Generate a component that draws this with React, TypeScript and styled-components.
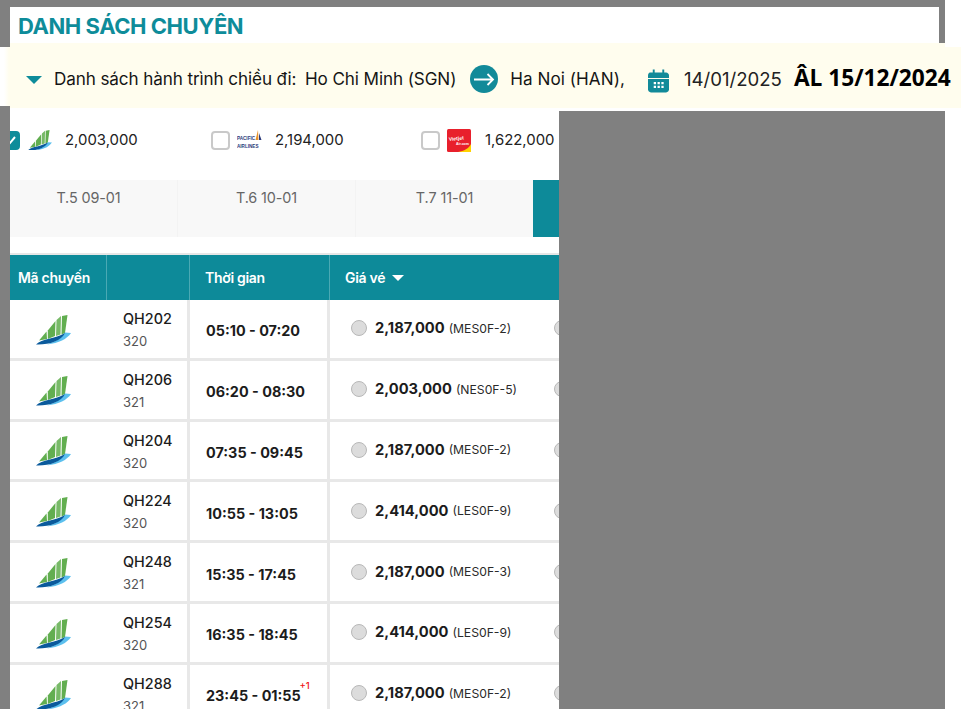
import React from "react";
import styled, { createGlobalStyle } from "styled-components";

const Global = createGlobalStyle`
  html, body { margin: 0; padding: 0; background: #fff; height: 100%; overflow: hidden; }
  #root { height: 100%; }
  * { box-sizing: border-box; }
  body { font-family: Inter, "Liberation Sans", sans-serif; color: #1a1a1a; }
`;

const Stage = styled.div`
  position: relative;
  width: 963px;
  height: 709px;
  overflow: hidden;
`;
const Canvas = styled.div`
  width: 945px;
  height: 709px;
  background: #808080;
  padding: 7px 0 0 10px;
`;
const TitleBar = styled.div`
  width: 929px;
  height: 36px;
  background: #fff;
  padding: 2px 0 0 8px;
  display: flex;
  align-items: center;
`;
const Title = styled.h1`
  margin: 0;
  font-size: 22px;
  font-weight: 700;
  letter-spacing: -0.45px;
  color: #0e8c9a;
  line-height: 1;
`;
const Panel = styled.div`
  width: 549px;
  height: 666px;
  background: #fff;
  padding-top: 87px;
  overflow: hidden;
`;
const Banner = styled.div`
  position: absolute;
  left: 10px;
  top: 43px;
  width: 951px;
  height: 65px;
  background: #fffdee;
  box-shadow: 0 3px 0 #fff;
  display: flex;
  align-items: center;
  padding: 6px 0 0 16px;
  font-size: 17.1px;
  letter-spacing: -0.1px;
  color: #151515;
  &::before {
    content: "";
    position: absolute;
    left: -10px;
    top: 4px;
    width: 10px;
    height: 59px;
    background: linear-gradient(90deg, #fff 40%, #fffdee 90%);
  }
  &::after {
    content: "";
    position: absolute;
    right: 0;
    top: 0;
    width: 16px;
    height: 4px;
    background: #fff;
  }
`;
const Caret = styled.span`
  width: 0;
  height: 0;
  border-left: 8px solid transparent;
  border-right: 8px solid transparent;
  border-top: 8px solid #0e8c9a;
  margin: 2px 12px 0 0;
`;
const Label = styled.span`
  white-space: nowrap;
  width: 251px;
`;
const Place = styled.span`
  white-space: nowrap;
`;
const HanoiPlace = styled(Place)`
  letter-spacing: 0.05px;
`;
const ArrowDisc = styled.span`
  width: 28px;
  height: 28px;
  margin: 0 12px 0 14px;
  display: flex;
`;
const CalendarSlot = styled.span`
  width: 21px;
  height: 25px;
  margin: 4px 15px 0 23px;
  display: flex;
`;
const DateText = styled.span`
  white-space: nowrap;
  color: #222;
  font-size: 18.6px;
  letter-spacing: 0;
`;
const Lunar = styled.span`
  white-space: nowrap;
  font-family: "Open Sans", "Noto Sans", sans-serif;
  font-weight: 700;
  font-size: 22.7px;
  letter-spacing: 0;
  color: #000;
  margin: -3px 0 0 12px;
`;
const FilterRow = styled.div`
  display: flex;
  margin-left: -9px;
  height: 20px;
  align-items: center;
`;
const FilterItem = styled.div`
  flex: 0 0 210px;
  display: flex;
  align-items: center;
`;
const Check = styled.span<{ $on?: boolean }>`
  width: 19px;
  height: 19px;
  border-radius: 4px;
  border: 2px solid ${(p) => (p.$on ? "#0e8c9a" : "#c9c9c9")};
  background: ${(p) => (p.$on ? "#0e8c9a" : "#fff")};
  display: flex;
  align-items: center;
  justify-content: center;
`;
const LogoSlot = styled.span`
  width: 37px;
  margin-left: 7px;
  display: flex;
`;
const FilterPrice = styled.span`
  margin-left: 1px;
  font-size: 14.9px;
  color: #222;
`;
const Tabs = styled.div`
  display: flex;
  margin: 30px 0 0 -11px;
  height: 57px;
  background: #f8f8f8;
`;
const Tab = styled.div<{ $active?: boolean }>`
  flex: 0 0 178px;
  padding-top: 9px;
  text-align: center;
  font-size: 14.4px;
  letter-spacing: -0.1px;
  color: #666;
  background: ${(p) => (p.$active ? "#0d8a99" : "transparent")};
  border-left: 1px solid ${(p) => (p.$active ? "#0d8a99" : "#f3f3f3")};
`;
const Table = styled.div`
  margin-top: 16px;
  border-top: 2px solid #e6e6e6;
`;
const Grid = styled.div`
  display: grid;
  grid-template-columns: 97px 83px 140px 229px;
`;
const HeadRow = styled(Grid)`
  height: 45px;
  background: #0d8a99;
`;
const HeadCell = styled.div<{ $pad: number }>`
  display: flex;
  align-items: center;
  padding-left: ${(p) => p.$pad}px;
  color: #fff;
  font-size: 14px;
  font-weight: 600;
  letter-spacing: -0.3px;
  border-right: 1px solid #4aa9b4;
  &:last-child { border-right: 0; }
`;
const SortCaret = styled.span`
  width: 0;
  height: 0;
  margin-left: 7px;
  border-left: 6px solid transparent;
  border-right: 6px solid transparent;
  border-top: 6px solid #fff;
`;
const Row = styled(Grid)`
  height: 60.8px;
  border-bottom: 3px solid #e8e8e8;
`;
const LogoCell = styled.div`
  display: flex;
  justify-content: center;
  align-items: center;
  padding: 2px 11px 0 0;
`;
const CodeCell = styled.div`
  padding: 10px 0 0 16px;
  border-right: 3px solid #e8e8e8;
`;
const FlightNo = styled.div`
  font-size: 14.4px;
  font-weight: 500;
  line-height: 18px;
  color: #1c1c1c;
`;
const Craft = styled.div`
  margin-top: 5px;
  font-size: 13px;
  line-height: 16px;
  color: #555;
`;
const TimeCell = styled.div`
  display: flex;
  align-items: center;
  padding: 4px 0 0 16px;
  font-size: 14.4px;
  font-weight: 700;
  color: #1c1c1c;
  border-right: 3px solid #e8e8e8;
`;
const TimeText = styled.span`
  position: relative;
`;
const Plus = styled.sup`
  position: absolute;
  right: -9px;
  top: -6px;
  margin: 0;
  font-size: 9.5px;
  line-height: 1;
  font-weight: 500;
  color: #f01414;
`;
const PriceCell = styled.div`
  display: flex;
  align-items: center;
  padding: 0 0 1px 21px;
  position: relative;
`;
const Radio = styled.span`
  flex: none;
  width: 16px;
  height: 16px;
  border-radius: 50%;
  background: #dcdcdc;
  border: 1px solid #b8b8b8;
  margin-right: 8px;
`;
const NextRadio = styled(Radio)`
  position: absolute;
  left: 224px;
  margin: 0;
`;
const Fare = styled.span`
  font-size: 14.7px;
  font-weight: 700;
  color: #1c1c1c;
`;
const FareCode = styled.span`
  margin-left: 4px;
  font-size: 12.2px;
  color: #2a2a2a;
`;

const Bamboo = ({ w = 36 }: { w?: number }) => (
  <svg width={w} height={(w * 30) / 36} viewBox="0 0 36 30">
    <path d="M4 25.5 L11.5 16.5 L12 24Z" fill="#62ae50" />
    <path d="M12.8 24 L12.8 15.5 L20.5 6 L20 21Z" fill="#62ae50" />
    <path d="M21 21 L21.5 5 L26 1 L25.5 19.5Z" fill="#78ba68" />
    <path d="M26.5 19.5 L27 1 L32.5 0 L30 18Z" fill="#62ae50" />
    <path d="M30 17.5 L36 18 C32 24 24 28 12 29.5 C20 27 26 23 30 17.5Z" fill="#5cc0ee" />
    <path d="M1 29.5 C7 23.5 20 24 30 18 C26 26 14 30 1 29.5Z" fill="#0a5a9c" />
  </svg>
);

const Pacific = () => (
  <svg width="25" height="20" viewBox="0 0 25 20">
    <path d="M21 0 L21.5 10 L18.5 10Z" fill="#e8922a" />
    <path d="M22 3 L24.5 10 L22 10Z" fill="#2b3a7a" />
    <text x="0" y="10" fontFamily="Liberation Sans" fontWeight="700" fontSize="4.6" fill="#2b3a7a">PACIFIC</text>
    <text x="0" y="18" fontFamily="Liberation Sans" fontWeight="700" fontSize="4.6" fill="#2b3a7a">AIRLINES</text>
  </svg>
);

const Vietjet = () => (
  <svg width="24" height="23" viewBox="0 0 24 23">
    <rect width="24" height="23" rx="1.5" fill="#e8202c" />
    <path d="M24 15 V23 H11 C17 22 22 19.5 24 15Z" fill="#ffd200" />
    <text x="2" y="12" fontFamily="Liberation Sans" fontWeight="700" fontSize="5" fill="#fff" transform="rotate(-6 2 12)">Vietjet</text>
    <text x="9" y="16" fontFamily="Liberation Sans" fontWeight="700" fontSize="3.5" fill="#fff">Air.com</text>
  </svg>
);

const flights = [
  { no: "QH202", craft: "320", time: "05:10 - 07:20", fare: "2,187,000", code: "(MES0F-2)" },
  { no: "QH206", craft: "321", time: "06:20 - 08:30", fare: "2,003,000", code: "(NES0F-5)" },
  { no: "QH204", craft: "320", time: "07:35 - 09:45", fare: "2,187,000", code: "(MES0F-2)" },
  { no: "QH224", craft: "320", time: "10:55 - 13:05", fare: "2,414,000", code: "(LES0F-9)" },
  { no: "QH248", craft: "321", time: "15:35 - 17:45", fare: "2,187,000", code: "(MES0F-3)" },
  { no: "QH254", craft: "320", time: "16:35 - 18:45", fare: "2,414,000", code: "(LES0F-9)" },
  { no: "QH288", craft: "321", time: "23:45 - 01:55", fare: "2,187,000", code: "(MES0F-2)", plus: true },
];

export default function App() {
  return (
    <Stage>
      <Global />
      <Canvas>
        <TitleBar>
          <Title>DANH SÁCH CHUYÊN</Title>
        </TitleBar>
        <Panel>
          <FilterRow>
            <FilterItem>
              <Check $on>
                <svg width="13" height="13" viewBox="0 0 13 13">
                  <path d="M2 7 L5.2 10 L11 3" fill="none" stroke="#fff" strokeWidth="2" />
                </svg>
              </Check>
              <LogoSlot><Bamboo w={25} /></LogoSlot>
              <FilterPrice>2,003,000</FilterPrice>
            </FilterItem>
            <FilterItem>
              <Check />
              <LogoSlot><Pacific /></LogoSlot>
              <FilterPrice>2,194,000</FilterPrice>
            </FilterItem>
            <FilterItem>
              <Check />
              <LogoSlot><Vietjet /></LogoSlot>
              <FilterPrice>1,622,000</FilterPrice>
            </FilterItem>
          </FilterRow>
          <Tabs>
            <Tab>T.5 09-01</Tab>
            <Tab>T.6 10-01</Tab>
            <Tab>T.7 11-01</Tab>
            <Tab $active />
          </Tabs>
          <Table>
            <HeadRow>
              <HeadCell $pad={8}>Mã chuyến</HeadCell>
              <HeadCell $pad={0} />
              <HeadCell $pad={15}>Thời gian</HeadCell>
              <HeadCell $pad={15}>
                Giá vé<SortCaret />
              </HeadCell>
            </HeadRow>
            {flights.map((f) => (
              <Row key={f.no}>
                <LogoCell><Bamboo /></LogoCell>
                <CodeCell>
                  <FlightNo>{f.no}</FlightNo>
                  <Craft>{f.craft}</Craft>
                </CodeCell>
                <TimeCell>
                  <TimeText>
                    {f.time}
                    {f.plus && <Plus>+1</Plus>}
                  </TimeText>
                </TimeCell>
                <PriceCell>
                  <Radio />
                  <Fare>{f.fare}</Fare>
                  <FareCode>{f.code}</FareCode>
                  <NextRadio />
                </PriceCell>
              </Row>
            ))}
          </Table>
        </Panel>
      </Canvas>
      <Banner>
        <Caret />
        <Label>Danh sách hành trình chiều đi:</Label>
        <Place>Ho Chi Minh (SGN)</Place>
        <ArrowDisc>
          <svg width="28" height="28" viewBox="0 0 28 28">
            <circle cx="14" cy="14" r="14" fill="#128a99" />
            <path d="M4 14.5 H23 M17.5 9 L23 14.5 L17.5 20" fill="none" stroke="#fff" strokeWidth="1.8" />
          </svg>
        </ArrowDisc>
        <HanoiPlace>Ha Noi (HAN),</HanoiPlace>
        <CalendarSlot>
          <svg width="21" height="25" viewBox="0 0 22 25">
            <path d="M2 4 H19 C20.5 4 22 5.5 22 7 V10 H0 V7 C0 5.5 1 4 2 4Z" fill="#128a99" />
            <path d="M5 1 H7 V5 H5Z M15 1 H17 V5 H15Z" fill="#128a99" />
            <path d="M0 11 H22 V22 C22 23.5 20.5 25 19 25 H3 C1.5 25 0 23.5 0 22Z" fill="#128a99" />
            <path d="M6 14 h2.4 v2.4 h-2.4z M10 14 h2.4 v2.4 h-2.4z M14 14 h2.4 v2.4 h-2.4z M6 18 h2.4 v2.4 h-2.4z M10 18 h2.4 v2.4 h-2.4z M14 18 h2.4 v2.4 h-2.4z" fill="#fff" />
          </svg>
        </CalendarSlot>
        <DateText>14/01/2025</DateText>
        <Lunar>ÂL 15/12/2024</Lunar>
      </Banner>
    </Stage>
  );
}
